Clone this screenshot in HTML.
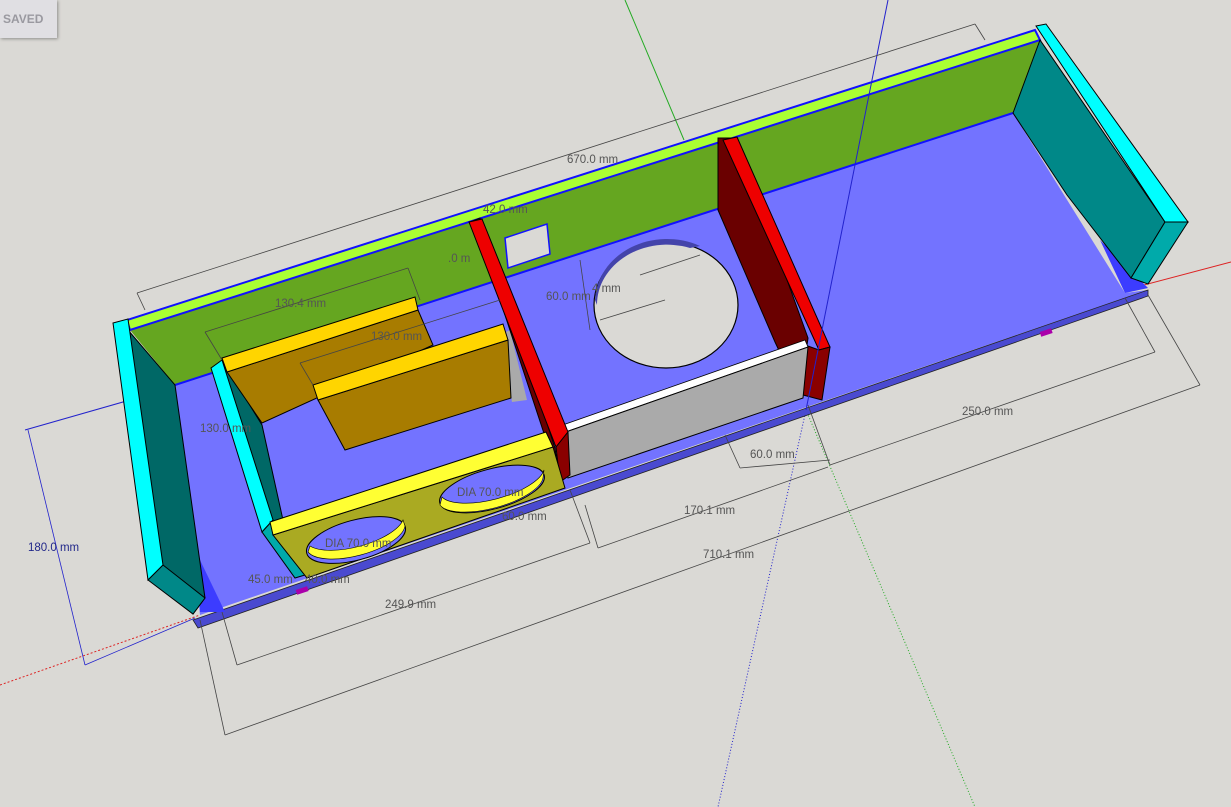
<!DOCTYPE html>
<html><head><meta charset="utf-8"><style>
html,body{margin:0;padding:0;background:#dad9d5;width:1231px;height:807px;overflow:hidden;font-family:"Liberation Sans",sans-serif}
.saved{position:absolute;left:0;top:0;width:57px;height:38px;background:#e0dfe3;box-shadow:1px 1px 3px rgba(0,0,0,.35);color:#9a99a0;font-weight:bold;font-size:12px;line-height:38px;text-indent:3px}
svg{position:absolute;left:0;top:0}
text{font-family:"Liberation Sans",sans-serif;font-size:11.5px;fill:#555}
</style></head><body>
<svg width="1231" height="807" viewBox="0 0 1231 807">
<g stroke-width="1" fill="none">
<line x1="625" y1="0" x2="684" y2="140" stroke="#2a2"/>
<line x1="25" y1="430" x2="130" y2="400" stroke="#22c"/>
<line x1="0" y1="685" x2="200" y2="615" stroke="#d22" stroke-dasharray="2,2"/>
<line x1="1125" y1="290" x2="1231" y2="262" stroke="#d22"/>
<line x1="806" y1="410" x2="718" y2="807" stroke="#22c" stroke-dasharray="1,2"/>
<line x1="806" y1="410" x2="975" y2="807" stroke="#2a2" stroke-dasharray="1,2"/>
</g>
<!-- floor -->
<polygon points="175,385 1013,113 1125,293 1148,290 200,615" fill="#7373ff"/>
<polygon points="193,620 1148,290 1148,296 198,628" fill="#4a4ad0" stroke="#222" stroke-width="0.8"/>
<polygon points="200,612 225,612 200,560" fill="#3c3cff"/>
<polygon points="1125,293 1148,288 1100,240" fill="#3c3cff"/>
<!-- back wall -->
<polygon points="130,330 1040,40 1013,113 175,385" fill="#65a620"/>
<polygon points="127,320 1035,30 1040,40 130,330" fill="#aaff33" stroke="#11f" stroke-width="2"/>
<line x1="175" y1="385" x2="1013" y2="113" stroke="#11f" stroke-width="2"/>
<!-- notch -->
<polygon points="505,238 547,224 550,254 508,268" fill="#dad9d5" stroke="#11f" stroke-width="1.5"/>
<!-- right end panel -->
<polygon points="1040,40 1013,113 1067,195 1131,278 1165,222" fill="#008888" stroke="#000" stroke-width="1"/>
<polygon points="1036,26 1046,24 1188,222 1165,222" fill="#00ffff" stroke="#000" stroke-width="1"/>
<polygon points="1131,278 1165,222 1188,222 1148,284" fill="#00aaaa" stroke="#000" stroke-width="1"/>
<!-- left end panel -->
<polygon points="128,330 175,385 205,598 193,614 150,575" fill="#006866" stroke="#000" stroke-width="1"/>
<polygon points="113,323 128,319 163,565 148,580" fill="#00ffff" stroke="#000" stroke-width="1"/>
<polygon points="148,580 163,565 205,598 193,614" fill="#008888" stroke="#000" stroke-width="1"/>
<!-- circle hole -->
<ellipse cx="666" cy="305" rx="72" ry="63" fill="#dad9d5" stroke="#000" stroke-width="1.2"/>
<path d="M595,300 A72,63 0 0 1 700,246 L690,248 A70,60 0 0 0 597,305 Z" fill="#4444aa"/>
<!-- right red divider -->
<polygon points="718,138 736,138 808,338 800,395 775,342 718,210" fill="#6a0000" stroke="#000" stroke-width="1"/>
<polygon points="723,140 737,137 830,347 819,350" fill="#ee0000" stroke="#000" stroke-width="1"/>
<polygon points="805,345 819,350 830,347 822,400 803,395" fill="#8a0000" stroke="#000" stroke-width="1"/>
<!-- gray panel -->
<polygon points="557,427 805,340 808,347 560,434" fill="#fff" stroke="#000" stroke-width="0.8"/>
<polygon points="560,434 808,347 803,398 568,478" fill="#aaa" stroke="#000" stroke-width="1"/>
<polygon points="500,335 510,330 527,400 512,402" fill="#aaa"/>
<!-- left inner cyan panel -->
<polygon points="222,360 262,425 283,520 270,530" fill="#006866" stroke="#000" stroke-width="1"/>
<polygon points="211,368 222,360 273,520 262,532" fill="#00ffff" stroke="#000" stroke-width="1"/>
<polygon points="262,532 273,520 305,575 295,578" fill="#00aaaa" stroke="#000" stroke-width="1"/>
<!-- brown panels -->
<polygon points="227,372 418,310 433,345 262,423" fill="#a87c00" stroke="#000" stroke-width="1"/>
<polygon points="222,358 415,297 418,310 227,372" fill="#ffd500" stroke="#000" stroke-width="1"/>
<polygon points="318,400 508,340 511,398 345,450" fill="#a87c00" stroke="#000" stroke-width="1"/>
<polygon points="313,385 503,324 508,340 318,400" fill="#ffd500" stroke="#000" stroke-width="1"/>
<!-- left red divider -->
<polygon points="470,222 480,218 555,448 560,482 500,300" fill="#6a0000" stroke="#000" stroke-width="1"/>
<polygon points="469,222 482,219 568,432 556,447" fill="#ee0000" stroke="#000" stroke-width="1"/>
<polygon points="556,447 568,432 570,475 560,482" fill="#8a0000" stroke="#000" stroke-width="1"/>
<!-- yellow speaker panel -->
<polygon points="273,535 553,447 565,488 307,578" fill="#aaaa22" stroke="#000" stroke-width="1"/>
<polygon points="270,522 546,432 553,447 273,535" fill="#ffff33" stroke="#000" stroke-width="1"/>
<ellipse cx="356" cy="540" rx="51" ry="20" transform="rotate(-15 356 540)" fill="#7373ff" stroke="#000"/>
<path d="M308,552 A51,20 -15 0 0 405,526 L403,520 A51,20 -15 0 1 310,546Z" fill="#ffff33" stroke="#000" stroke-width=".6"/>
<ellipse cx="492" cy="489" rx="54" ry="20" transform="rotate(-15 492 489)" fill="#7373ff" stroke="#000"/>
<path d="M440,505 A54,20 -15 0 0 543,478 L544,470 A54,20 -15 0 1 442,497Z" fill="#ffff33" stroke="#000" stroke-width=".6"/>
<rect x="296" y="588" width="12" height="5" fill="#a0a" transform="rotate(-18 302 590)"/>
<rect x="1040" y="330" width="12" height="5" fill="#a0a" transform="rotate(-18 1046 332)"/>
<line x1="888" y1="0" x2="806" y2="410" stroke="#22c" stroke-width="1"/>
<!-- dimensions -->
<g stroke="#444" stroke-width="0.8" fill="none">
<line x1="137" y1="293" x2="975" y2="24"/><line x1="137" y1="293" x2="145" y2="310"/><line x1="975" y1="24" x2="985" y2="40"/>
<line x1="205" y1="332" x2="408" y2="268"/><line x1="408" y1="268" x2="420" y2="300"/><line x1="205" y1="332" x2="222" y2="360"/>
<line x1="300" y1="363" x2="500" y2="300"/><line x1="300" y1="363" x2="313" y2="385"/>
<line x1="580" y1="260" x2="590" y2="330"/>
<line x1="600" y1="320" x2="665" y2="300"/><line x1="640" y1="275" x2="700" y2="255"/>
<line x1="237" y1="665" x2="590" y2="543"/><line x1="237" y1="665" x2="222" y2="612"/><line x1="590" y1="543" x2="570" y2="490"/>
<line x1="225" y1="735" x2="1200" y2="385"/><line x1="225" y1="735" x2="200" y2="620"/><line x1="1200" y1="385" x2="1148" y2="295"/>
<line x1="598" y1="548" x2="828" y2="467"/><line x1="598" y1="548" x2="585" y2="505"/>
<line x1="830" y1="465" x2="1155" y2="352"/><line x1="1155" y1="352" x2="1125" y2="298"/>
<line x1="740" y1="468" x2="830" y2="460"/><line x1="740" y1="468" x2="725" y2="435"/><line x1="808" y1="405" x2="830" y2="465"/>
<line x1="85" y1="665" x2="195" y2="618" stroke="#22c"/><line x1="28" y1="430" x2="85" y2="665" stroke="#22c"/>
</g>
<text x="567" y="163">670.0 mm</text>
<text x="483" y="213">42.0 mm</text>
<text x="448" y="262">.0 m</text>
<text x="275" y="307">130.4 mm</text>
<text x="371" y="340">130.0 mm</text>
<text x="546" y="300">60.0 mm</text>
<text x="592" y="292">4 mm</text>
<text x="200" y="432">130.0 mm</text>
<text x="962" y="415">250.0 mm</text>
<text x="750" y="458">60.0 mm</text>
<text x="684" y="514">170.1 mm</text>
<text x="703" y="558">710.1 mm</text>
<text x="385" y="608">249.9 mm</text>
<text x="325" y="547">DIA 70.0 mm</text>
<text x="457" y="496">DIA 70.0 mm</text>
<text x="502" y="520">60.0 mm</text>
<text x="248" y="583">45.0 mm</text>
<text x="305" y="583">40.0 mm</text>
<text x="28" y="551" style="fill:#22288a">180.0 mm</text>
</svg>
<div class="saved">SAVED</div>
</body></html>
